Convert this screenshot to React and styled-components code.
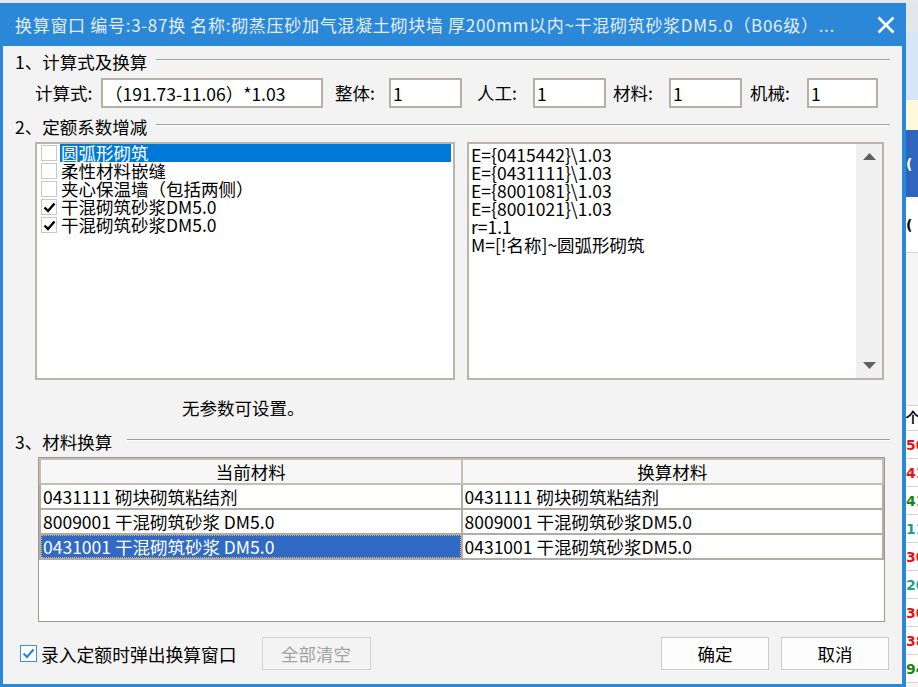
import React from "react";
import styled, { createGlobalStyle } from "styled-components";

const GlobalStyle = createGlobalStyle`
  html, body {
    margin: 0;
    padding: 0;
    background: #eef1f5;
  }
  body {
    font-family: "Noto Sans CJK SC", "Noto Sans", sans-serif;
    color: #000;
  }
  #root {
    width: 918px;
    height: 687px;
    overflow: hidden;
  }
`;

const Page = styled.div`
  width: 918px;
  height: 687px;
  display: flex;
  flex-direction: column;
  overflow: hidden;
`;

const TopStrip = styled.div`
  height: 3px;
  flex: none;
  background: #e4e8ed;
`;

const Main = styled.div`
  flex: 1;
  display: flex;
  min-height: 0;
`;

const Dialog = styled.div`
  width: 906px;
  flex: none;
  display: flex;
  flex-direction: column;
  background: #2b88d9;
`;

const TitleBar = styled.div`
  height: 43px;
  flex: none;
  display: flex;
  align-items: center;
  padding-left: 15px;
  color: #e4eefa;
`;

const Title = styled.div`
  flex: 1;
  font-size: 17px;
  line-height: 22px;
  letter-spacing: 0.7px;
  white-space: nowrap;
  overflow: hidden;
`;

const CloseButton = styled.div`
  width: 40px;
  height: 43px;
  display: flex;
  align-items: center;
  justify-content: center;
`;

const Client = styled.div`
  flex: 1;
  margin: 0 4px 3px 3px;
  background: #f3f3f3;
  display: flex;
  flex-direction: column;
`;

const SectionHead = styled.div`
  display: flex;
  align-items: center;
  height: 20px;
  margin-top: ${(p) => p.$mt}px;
  padding: 0 12px;
  font-size: 17.5px;
  line-height: 20px;
  white-space: nowrap;
`;

const SectionRule = styled.div`
  flex: 1;
  height: 0;
  margin-left: ${(p) => p.$gap}px;
  margin-top: -4px;
  border-top: 1px solid #a0a0a0;
  border-bottom: 1px solid #ffffff;
`;

const FormulaRow = styled.div`
  display: flex;
  align-items: center;
  height: 30px;
  margin-top: 6px;
  padding-left: 32px;
`;

const Field = styled.label`
  display: flex;
  align-items: center;
  margin-left: ${(p) => p.$ml || 0}px;
`;

const FieldLabel = styled.span`
  width: ${(p) => p.$w}px;
  font-size: 17.5px;
  line-height: 20px;
  white-space: nowrap;
`;

const TextInput = styled.input`
  width: ${(p) => p.$w}px;
  height: 30px;
  box-sizing: border-box;
  border: 2px solid #b5b1a7;
  background: #fff;
  padding: 0 0 0 2px;
  margin: 0;
  font-family: inherit;
  font-size: 17.5px;
  color: #000;
  outline: none;
`;

const ListRow = styled.div`
  display: flex;
  gap: 12px;
  height: 238px;
  margin-top: 5px;
  padding-left: 32px;
`;

const CheckList = styled.div`
  width: 420px;
  box-sizing: border-box;
  border: 2px solid #b8b4aa;
  background: #fff;
  padding: 0 2px 0 4px;
`;

const ListItem = styled.div`
  display: flex;
  align-items: center;
  height: 18px;
  gap: 3px;
`;

const ItemBox = styled.span`
  width: 16px;
  height: 16px;
  flex: none;
  box-sizing: border-box;
  border: 1px solid #c8c8c8;
  background: #fff;
  display: flex;
  align-items: center;
  justify-content: center;
`;

const ItemText = styled.span`
  flex: 1;
  height: 18px;
  padding-left: 1px;
  font-size: 17.5px;
  line-height: 18px;
  white-space: nowrap;
  background: ${(p) => (p.$selected ? "#0078d7" : "transparent")};
  color: ${(p) => (p.$selected ? "#fff" : "#000")};
`;

const ScriptBox = styled.div`
  width: 417px;
  box-sizing: border-box;
  border: 2px solid #b8b4aa;
  background: #fff;
  display: flex;
`;

const ScriptText = styled.div`
  flex: 1;
  padding: 2px 0 0 2px;
  font-size: 17.5px;
  line-height: 18px;
  white-space: pre;
`;

const ScrollTrack = styled.div`
  width: 26px;
  flex: none;
  background: #f0f0f0;
  display: flex;
  flex-direction: column;
  justify-content: space-between;
  align-items: center;
  padding: 9px 0;
  box-sizing: border-box;
`;

const Hint = styled.div`
  height: 20px;
  margin-top: 18px;
  padding-left: 179px;
  font-size: 17.5px;
  line-height: 20px;
`;

const GridBox = styled.div`
  width: 847px;
  height: 165px;
  box-sizing: border-box;
  margin: 5px 0 0 35px;
  border: 1px solid #9d9990;
  background: #fff;
`;

const Table = styled.table`
  width: 100%;
  border-collapse: collapse;
  table-layout: fixed;
`;

const HeadCell = styled.th`
  height: 23px;
  padding: 0;
  border: 2px solid #c3bfb6;
  background: #f7f7f7;
  font-weight: normal;
  font-size: 17.5px;
  line-height: 20px;
  text-align: center;
`;

const Cell = styled.td`
  height: 23px;
  padding: 0 0 0 2px;
  border: 2px solid #b1ada4;
  font-size: 17.5px;
  line-height: 20px;
  white-space: nowrap;
  background: ${(p) => (p.$selected ? "#316ac5" : "#fff")};
  color: ${(p) => (p.$selected ? "#fff" : "#000")};
  outline: ${(p) => (p.$selected ? "1px dotted #d6b26a" : "none")};
  outline-offset: -2px;
`;

const Footer = styled.div`
  display: flex;
  align-items: center;
  height: 33px;
  margin-top: 15px;
  padding: 0 13px 0 17px;
`;

const CheckLabel = styled.label`
  display: flex;
  align-items: center;
  gap: 4px;
  font-size: 17.8px;
  line-height: 20px;
  white-space: nowrap;
`;

const BlueBox = styled.span`
  width: 17px;
  height: 17px;
  box-sizing: border-box;
  border: 1px solid #3c8de3;
  background: #fff;
  display: flex;
  align-items: center;
  justify-content: center;
`;

const Button = styled.button`
  width: ${(p) => p.$w}px;
  height: 33px;
  margin-left: ${(p) => p.$ml || 0}px;
  box-sizing: border-box;
  border: 1px solid ${(p) => (p.disabled ? "#d2d2d2" : "#cdcdcd")};
  background: ${(p) => (p.disabled ? "#f4f4f4" : "#fdfdfd")};
  color: ${(p) => (p.disabled ? "#a3a3a3" : "#000")};
  font-family: inherit;
  font-size: 17.5px;
  padding: 0;
`;

const Spacer = styled.div`
  flex: 1;
`;

const BackStrip = styled.div`
  flex: 1;
  display: flex;
  flex-direction: column;
  overflow: hidden;
  background: #f5f5f5;
`;

const StripRow = styled.div`
  height: ${(p) => p.$h}px;
  flex: none;
  background: ${(p) => p.$bg || "transparent"};
  color: ${(p) => p.$color || "#000"};
  border-bottom: ${(p) => (p.$line ? "1px solid #d4d4d4" : "none")};
  box-sizing: border-box;
  display: flex;
  align-items: center;
  font-family: "DejaVu Sans", sans-serif;
  font-weight: bold;
  font-size: 14px;
  white-space: nowrap;
`;

const CloseIcon = () => (
  <svg width="18" height="18" viewBox="0 0 18 18">
    <path d="M1.5 1.5 L16.5 16.5 M16.5 1.5 L1.5 16.5" stroke="#fff" strokeWidth="2.6" fill="none" />
  </svg>
);

const Tick = () => (
  <svg width="13" height="11" viewBox="0 0 13 11">
    <path d="M1.5 5.5 L5 9 L11.5 1.5" stroke="#000" strokeWidth="2.4" fill="none" />
  </svg>
);

const BlueTick = () => (
  <svg width="13" height="11" viewBox="0 0 13 11">
    <path d="M1.5 5.5 L5 9 L11.5 1.5" stroke="#2a7be0" strokeWidth="2" fill="none" />
  </svg>
);

const Arrow = ({ down }) => (
  <svg width="13" height="7" viewBox="0 0 13 7">
    <path d={down ? "M0 0 L13 0 L6.5 7 Z" : "M0 7 L13 7 L6.5 0 Z"} fill="#606060" />
  </svg>
);

const fields = [
  { label: "计算式:", lw: 66, iw: 222, ml: 0, value: "（191.73-11.06）*1.03" },
  { label: "整体:", lw: 54, iw: 73, ml: 12, value: "1" },
  { label: "人工:", lw: 56, iw: 73, ml: 15, value: "1" },
  { label: "材料:", lw: 56, iw: 73, ml: 7, value: "1" },
  { label: "机械:", lw: 57, iw: 71, ml: 8, value: "1" },
];

const coefItems = [
  { text: "圆弧形砌筑", checked: false, selected: true },
  { text: "柔性材料嵌缝", checked: false },
  { text: "夹心保温墙（包括两侧）", checked: false },
  { text: "干混砌筑砂浆DM5.0", checked: true },
  { text: "干混砌筑砂浆DM5.0", checked: true },
];

const scriptLines = [
  "E={0415442}\\1.03",
  "E={0431111}\\1.03",
  "E={8001081}\\1.03",
  "E={8001021}\\1.03",
  "r=1.1",
  "M=[!名称]~圆弧形砌筑",
];

const materials = [
  ["0431111  砌块砌筑粘结剂", "0431111  砌块砌筑粘结剂"],
  ["8009001  干混砌筑砂浆 DM5.0", "8009001  干混砌筑砂浆DM5.0"],
  ["0431001  干混砌筑砂浆 DM5.0", "0431001  干混砌筑砂浆DM5.0"],
];

const stripRows = [
  { h: 29, bg: "#e3e7ec" },
  { h: 68, bg: "#d6e6f6" },
  { h: 30, bg: "#fff9dc" },
  { h: 67, bg: "#2f64bf", color: "#fff", text: "(" },
  { h: 56, bg: "#fff", text: "(", line: true },
  { h: 153, bg: "#f5f5f5", line: true },
  { h: 25, bg: "#fff", text: "个", line: true },
  { h: 28, bg: "#fff", color: "#f01010", text: "50", line: true },
  { h: 28, bg: "#fff", color: "#f01010", text: "41", line: true },
  { h: 28, bg: "#fff", color: "#138a13", text: "41", line: true },
  { h: 28, bg: "#fff", color: "#1a9a9a", text: "11", line: true },
  { h: 28, bg: "#fff", color: "#f01010", text: "30", line: true },
  { h: 28, bg: "#fff", color: "#1a9a9a", text: "20", line: true },
  { h: 28, bg: "#fff", color: "#f01010", text: "30", line: true },
  { h: 28, bg: "#fff", color: "#f01010", text: "38", line: true },
  { h: 28, bg: "#fff", color: "#138a13", text: "94", line: true },
];

export default function App() {
  return (
    <>
      <GlobalStyle />
      <Page>
        <TopStrip />
        <Main>
          <Dialog>
            <TitleBar>
              <Title>换算窗口 编号:3-87换 名称:砌蒸压砂加气混凝土砌块墙 厚200mm以内~干混砌筑砂浆DM5.0（B06级）...</Title>
              <CloseButton>
                <CloseIcon />
              </CloseButton>
            </TitleBar>
            <Client>
              <SectionHead $mt={6}>
                1、计算式及换算
                <SectionRule $gap={9} />
              </SectionHead>
              <FormulaRow>
                {fields.map((f) => (
                  <Field key={f.label} $ml={f.ml}>
                    <FieldLabel $w={f.lw}>{f.label}</FieldLabel>
                    <TextInput $w={f.iw} defaultValue={f.value} readOnly />
                  </Field>
                ))}
              </FormulaRow>

              <SectionHead $mt={9}>
                2、定额系数增减
                <SectionRule $gap={9} />
              </SectionHead>
              <ListRow>
                <CheckList>
                  {coefItems.map((item, i) => (
                    <ListItem key={i}>
                      <ItemBox>{item.checked && <Tick />}</ItemBox>
                      <ItemText $selected={item.selected}>{item.text}</ItemText>
                    </ListItem>
                  ))}
                </CheckList>
                <ScriptBox>
                  <ScriptText>{scriptLines.join("\n")}</ScriptText>
                  <ScrollTrack>
                    <Arrow />
                    <Arrow down />
                  </ScrollTrack>
                </ScriptBox>
              </ListRow>

              <Hint>无参数可设置。</Hint>

              <SectionHead $mt={14}>
                3、材料换算
                <SectionRule $gap={15} />
              </SectionHead>
              <GridBox>
                <Table>
                  <thead>
                    <tr>
                      <HeadCell>当前材料</HeadCell>
                      <HeadCell>换算材料</HeadCell>
                    </tr>
                  </thead>
                  <tbody>
                    {materials.map((row, i) => (
                      <tr key={i}>
                        <Cell $selected={i === 2}>{row[0]}</Cell>
                        <Cell>{row[1]}</Cell>
                      </tr>
                    ))}
                  </tbody>
                </Table>
              </GridBox>

              <Footer>
                <CheckLabel>
                  <BlueBox>
                    <BlueTick />
                  </BlueBox>
                  录入定额时弹出换算窗口
                </CheckLabel>
                <Button $w={109} $ml={25} disabled>
                  全部清空
                </Button>
                <Spacer />
                <Button $w={108}>确定</Button>
                <Button $w={108} $ml={12}>
                  取消
                </Button>
              </Footer>
            </Client>
          </Dialog>
          <BackStrip>
            {stripRows.map((r, i) => (
              <StripRow key={i} $h={r.h} $bg={r.bg} $color={r.color} $line={r.line}>
                {r.text}
              </StripRow>
            ))}
          </BackStrip>
        </Main>
      </Page>
    </>
  );
}
